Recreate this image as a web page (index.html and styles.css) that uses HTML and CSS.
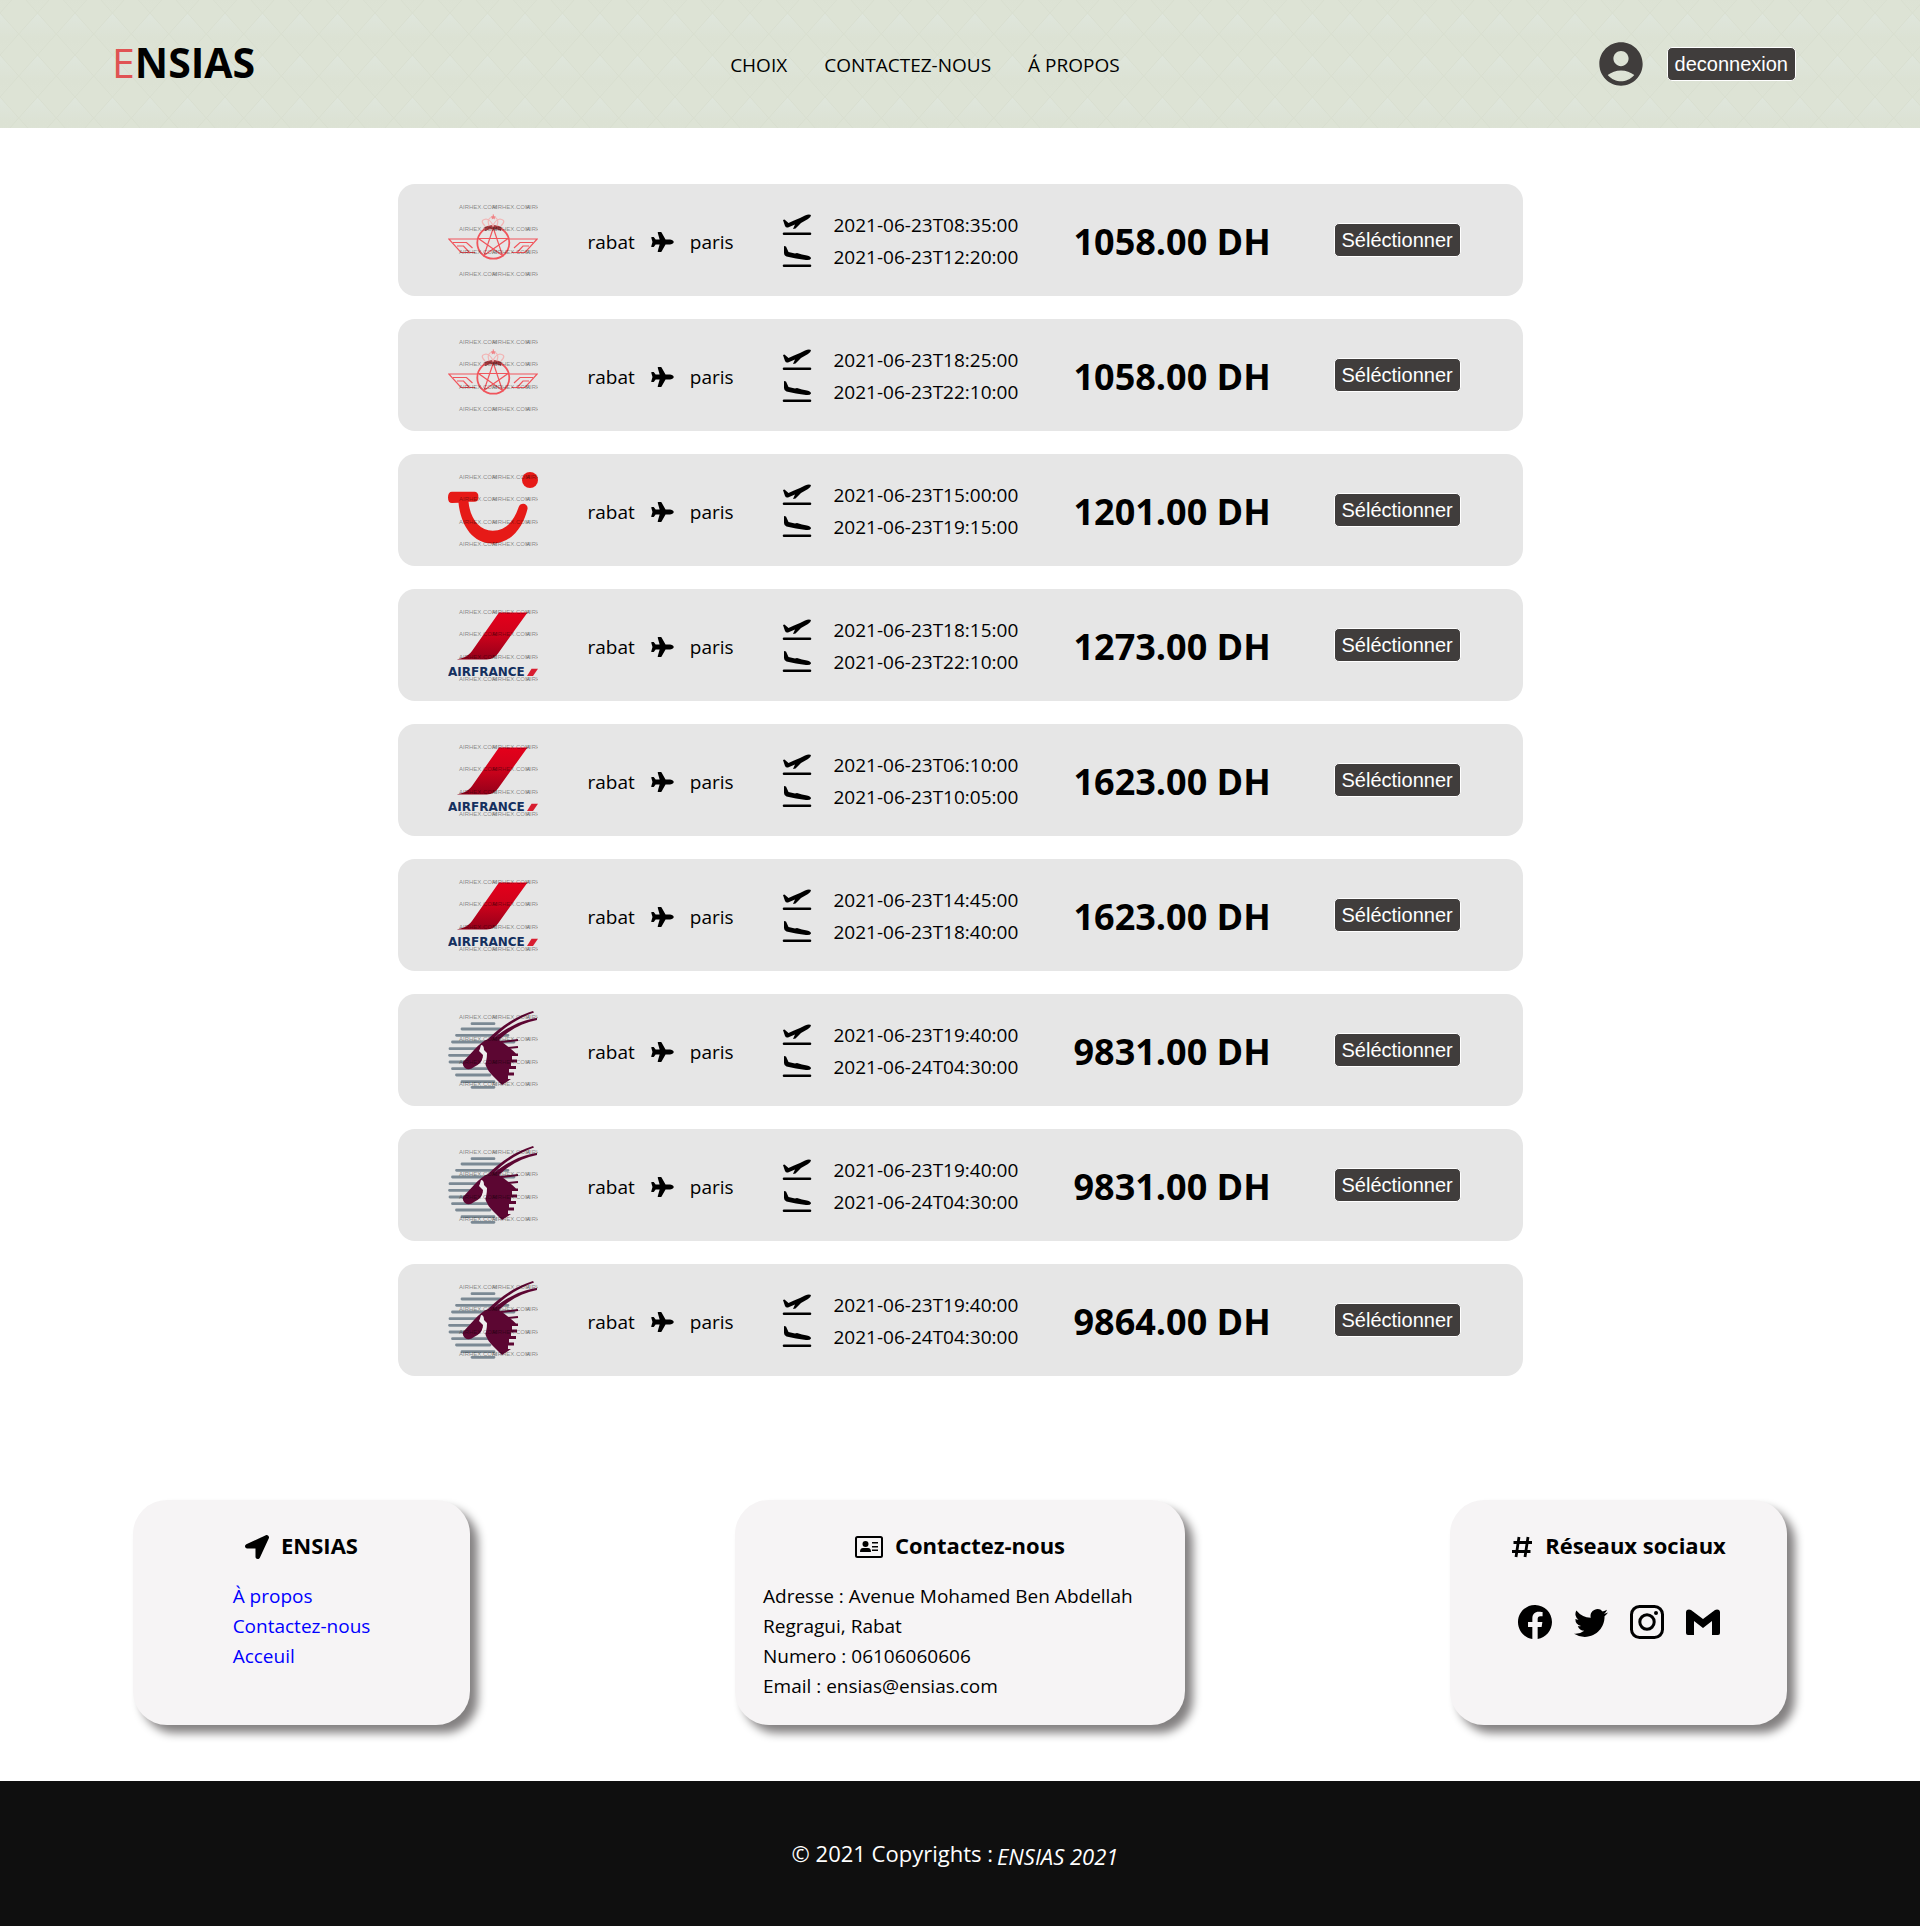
FILE: index.html
```html
<!DOCTYPE html>
<html lang="fr">
<head>
<meta charset="utf-8">
<meta name="viewport" content="width=device-width, initial-scale=1">
<title>ENSIAS - Vols</title>
<link rel="stylesheet" href="styles.css">
</head>
<body>
<svg class="sprite" aria-hidden="true">
  <defs>
    <linearGradient id="fin" x1="0" y1="0" x2="0" y2="1"><stop offset="0" stop-color="#e4001b"/><stop offset=".45" stop-color="#d0021b"/><stop offset="1" stop-color="#94001a"/></linearGradient>
    <g id="mark" class="mark">
      <text x="11" y="14">AIRHEX.COM</text><text x="44" y="14">AIRHEX.COM</text><text x="78" y="14">AIRHEX</text>
      <text x="11" y="36">AIRHEX.COM</text><text x="44" y="36">AIRHEX.COM</text><text x="78" y="36">AIRHEX</text>
      <text x="11" y="59">AIRHEX.COM</text><text x="44" y="59">AIRHEX.COM</text><text x="78" y="59">AIRHEX</text>
      <text x="11" y="81">AIRHEX.COM</text><text x="44" y="81">AIRHEX.COM</text><text x="78" y="81">AIRHEX</text>
    </g>
    <symbol id="logo-ram" viewBox="0 0 90 90">
      <g fill="none" stroke="#f0555c" stroke-width="1.2">
        <circle cx="45.3" cy="47.7" r="16" stroke-width="1.8"/>
        <path d="M45.3 33 54.5 60.5 30.5 43.5H60L36 60.5Z"/>
        <path d="M29 44H.8L13 57.5H27M5 47.5H18.500L24.500 53M9 51H15.500L21 57"/>
        <path d="M61.500 44H89.200L77 57.500H63.500M85 47.500H72L66 53M81 51H75L69.500 57"/>
      </g>
      <path d="M37 36q8-4 16 0l.5-4q-8-4-17 0Z" fill="#a53c40"/>
      <g fill="none" stroke="#f2b5b5" stroke-width="1.200"><path d="M37 31q-6-6 1-7 5 1 7 7 2-6 7-7 7 1 1 7M41 31q-3-8 4-9 7 1 4 9M45.300 22v-3"/></g>
      <path d="m45.300 19.500.8 1.700 1.800.2-1.300 1.300.3 1.800-1.600-.9-1.600.9.300-1.800-1.300-1.300 1.800-.2Z" fill="#ef8286"/>
      <use href="#mark"/>
    </symbol>
    <symbol id="logo-tui" viewBox="0 0 90 90">
      <circle cx="82" cy="15" r="8" fill="#e61a17"/>
      <path d="M4 26.700H26.500a3.800 3.800 0 0 1 3.800 4v2a4 4 0 0 1-4 4H20.500C22 53 31 65.700 44.700 65.700 58 65.700 66 56 70.500 42.500c2-6 10-4 9 1.500C76 59 65 78.500 44.700 78.500 23 78.500 12.500 58 10.500 37.700L4 38Q0 38 0 32.500 0 26.700 4 26.700Z" fill="#e61a17"/>
      <use href="#mark"/>
    </symbol>
    <symbol id="logo-af" viewBox="0 0 90 90">
      <path d="M51 12.500H79.500L50 53.500C46 58.500 42 59.500 37 59.500H8.700C17 58 21 55 24 51Z" fill="url(#fin)"/>
      <text x="0" y="76" class="af">AIRFRANCE</text>
      <path d="M79 76 83.500 68.700H90L85 76Z" fill="#d81e30"/>
      <use href="#mark"/>
    </symbol>
    <symbol id="logo-qatar" viewBox="0 0 90 90">
      <g stroke="#7b8994" stroke-width="2.800" stroke-linecap="round">
        <path d="M24 18.700H46M14 24H52M8.500 30.300H60M4.500 37H66M2 43.700H40M1.500 50.300H30M2 57H20M4.500 63.700H40M8.500 70H42M14 76.700H46M24 82.300H46"/>
      </g>
      <path d="M15 57 26 45Q33 37 40 34C52 22 66 12 85 6L86 7.500C70 13 57 22 46 33 57 24 72 15 89 13V15C74 18 61 25 51 35Q60 41 68 48.500H70V51H64V54.500H69V57.500H63V61H68V64H61V67.500H66V70.500H60V74H63L54 80 44 70Q36 62 36 50L33 58 26 62Q21 66 17 63 14 60 15 57Z" fill="#5c0632"/>
      <path d="M31 46Q32 44 33 40 36 40 36 45L39 48Q39 57 36 61L30 60Q35 56 35 50Z" fill="#eee"/>
      <path d="m53 37 17-2M59 43l11-1" stroke="#5c0632" stroke-width="2"/>
      <use href="#mark"/>
    </symbol>
    <symbol id="i-plane" viewBox="0 0 576 512"><path d="M480 192H365.710L260.610 8.060A16.014 16.014 0 0 0 246.710 0h-65.500c-10.630 0-18.300 10.170-15.380 20.390L214.860 192H112l-43.200-57.600c-3.020-4.030-7.770-6.400-12.800-6.400H16.010C5.600 128-2.040 137.780.49 147.880L32 256 .49 364.120C-2.040 374.220 5.600 384 16.010 384H56c5.040 0 9.780-2.370 12.800-6.400L112 320h102.860l-49.030 171.600c-2.920 10.220 4.750 20.400 15.380 20.400h65.500c5.740 0 11.040-3.080 13.890-8.060L365.710 320H480c35.350 0 96-28.650 96-64s-60.650-64-96-64z"/></symbol>
    <symbol id="i-up" viewBox="0 0 30 22"><path d="M2 18.500H28a1.300 1.300 0 0 1 0 2.600H2a1.300 1.300 0 0 1 0-2.600ZM1 6 2.500 5.500 6.500 9 12 6.500 18 4 23 1.500Q27-.3 29 1 29 3.300 26 5L19 9 13.500 14.500 11 15 13 10.500 6 13.500Q4 14 3 12Z"/></symbol>
    <symbol id="i-down" viewBox="0 0 30 22"><path d="M2 18.500H28a1.300 1.300 0 0 1 0 2.600H2a1.300 1.300 0 0 1 0-2.600ZM2 0 4 .5 6.500 6 13 7.500 15 7 20 8.500 25 9.500Q29 10.500 29 12.500 28 14.500 24 14L14 12.500 4.500 10.500Q2 9.500 2 7Z"/></symbol>
  </defs>
</svg>

<header class="header">
  <a class="brand" href="#"><span class="brand-e">E</span>NSIAS</a>
  <nav class="nav">
    <a href="#">CHOIX</a>
    <a href="#contact">CONTACTEZ-NOUS</a>
    <a href="#about">Á PROPOS</a>
  </nav>
  <div class="account">
    <svg class="user" viewBox="0 0 24 24" role="img" aria-label="Compte"><path d="M12 2C6.480 2 2 6.480 2 12s4.480 10 10 10 10-4.480 10-10S17.520 2 12 2zm0 4c1.930 0 3.500 1.570 3.500 3.500S13.930 13 12 13s-3.500-1.570-3.500-3.500S10.070 6 12 6zm0 14c-2.030 0-4.430-.820-6.140-2.880C7.550 15.800 9.680 15 12 15s4.450.8 6.140 2.120C16.430 19.180 14.030 20 12 20z"/></svg>
    <button class="btn" type="button">deconnexion</button>
  </div>
</header>

<main class="flights" id="flights"></main>

<section class="infos">
  <div class="info" id="about">
    <h2><svg class="i-nav" viewBox="0 0 512 512"><path d="M444.520 3.520L28.740 195.420c-47.970 22.390-31.980 92.750 19.190 92.750h175.910v175.910c0 51.170 70.360 67.170 92.750 19.190l191.900-415.780c15.990-38.390-25.590-79.970-63.970-63.970z"/></svg>ENSIAS</h2>
    <div class="links">
      <a href="#about">À propos</a>
      <a href="#contact">Contactez-nous</a>
      <a href="#flights">Acceuil</a>
    </div>
  </div>
  <div class="info info-wide" id="contact">
    <h2><svg class="i-card" viewBox="0 0 28 22"><rect x="1" y="1" width="26" height="20" rx="1.500" fill="none" stroke="#000" stroke-width="2"/><circle cx="10.500" cy="8" r="3"/><path d="M5 16q0-4 3-4h5q3 0 3 4ZM17 6h6v1.500h-6ZM17 10h6v1.500h-6ZM17 13.500h6V15h-6Z"/></svg>Contactez-nous</h2>
    <address>
      <p>Adresse : Avenue Mohamed Ben Abdellah Regragui, Rabat</p>
      <p>Numero : 06106060606</p>
      <p>Email : ensias@ensias.com</p>
    </address>
  </div>
  <div class="info">
    <h2><svg class="i-hash" viewBox="0 0 22 22"><path d="M8 1 5 21M17 1 14 21M2.500 6.500H21M1 15.500H19.500" fill="none" stroke="#000" stroke-width="2.800"/></svg>Réseaux sociaux</h2>
    <div class="social">
      <a href="#" aria-label="Facebook"><svg viewBox="0 0 16 16"><path d="M16 8.049c0-4.446-3.582-8.050-8-8.050C3.580 0-.002 3.603-.002 8.050c0 4.017 2.926 7.347 6.750 7.951v-5.625h-2.030V8.050H6.750V6.275c0-2.017 1.195-3.131 3.022-3.131.876 0 1.791.157 1.791.157v1.980h-1.009c-.993 0-1.303.621-1.303 1.258v1.510h2.218l-.354 2.326H9.250V16c3.824-.604 6.750-3.934 6.750-7.951z"/></svg></a>
      <a href="#" aria-label="Twitter"><svg viewBox="0 0 16 16"><path d="M5.026 15c6.038 0 9.341-5.003 9.341-9.334 0-.140 0-.282-.006-.422A6.685 6.685 0 0 0 16 3.542a6.658 6.658 0 0 1-1.889.518 3.301 3.301 0 0 0 1.447-1.817 6.533 6.533 0 0 1-2.087.793A3.286 3.286 0 0 0 7.875 6.030a9.325 9.325 0 0 1-6.767-3.429 3.289 3.289 0 0 0 1.018 4.382A3.323 3.323 0 0 1 .640 6.575v.045a3.288 3.288 0 0 0 2.632 3.218 3.203 3.203 0 0 1-.865.115 3.230 3.230 0 0 1-.614-.057 3.283 3.283 0 0 0 3.067 2.277A6.588 6.588 0 0 1 .780 13.580a6.320 6.320 0 0 1-.780-.045A9.344 9.344 0 0 0 5.026 15z"/></svg></a>
      <a href="#" aria-label="Instagram"><svg viewBox="0 0 34 34"><rect x="1.500" y="1.500" width="31" height="31" rx="8" fill="none" stroke="#000" stroke-width="3"/><circle cx="17" cy="17" r="7.200" fill="none" stroke="#000" stroke-width="3"/><circle cx="26" cy="8" r="2"/></svg></a>
      <a href="#" aria-label="Gmail"><svg viewBox="0 0 34 34"><path d="M0 7.500Q0 4.500 3 4.500L5 5 17 14 29 5 31 4.500Q34 4.500 34 7.500V28Q34 30 32 30H26V16L17 23 8 16V30H2Q0 30 0 28Z"/></svg></a>
    </div>
  </div>
</section>

<footer class="footer">
  <span>© 2021 Copyrights :</span>
  <a href="#">ENSIAS 2021</a>
</footer>
<script src="flights.js"></script>
</body>
</html>
```
FILE: styles.css
```css
* { box-sizing: border-box; }

body {
  margin: 0;
  background: #fff;
  color: #000;
  font-family: "Open Sans", "Noto Sans", sans-serif;
  font-size: 19px;
  font-weight: 400;
  line-height: 30px;
}

a { color: inherit; text-decoration: none; }
svg { display: block; flex: none; }
h2, p { margin: 0; }

.sprite { position: absolute; width: 0; height: 0; }

.header {
  display: flex;
  align-items: center;
  justify-content: space-between;
  min-height: 128px;
  padding: 0 124px 0 112px;
  background: #dde3d5 url("data:image/svg+xml,%3Csvg xmlns='http://www.w3.org/2000/svg' width='75' height='42' viewBox='0 0 75 42'%3E%3Cdefs%3E%3ClinearGradient id='g' x1='0' y1='0' x2='0' y2='1'%3E%3Cstop offset='0' stop-color='%23dfe6dc'/%3E%3Cstop offset='.6' stop-color='%23dce2d4'/%3E%3Cstop offset='1' stop-color='%23dde3d5'/%3E%3C/linearGradient%3E%3C/defs%3E%3Cpath d='M0 0l18.75 21L0 42l-18.750-21zM37.500 0l18.750 21-18.750 21-18.750-21zM75 0l18.750 21L75 42 56.250 21z' fill='url(%23g)'/%3E%3Cpath d='M0 0l37.500 42L75 0M0 42L37.500 0 75 42' fill='none' stroke='%23d8decf'/%3E%3C/svg%3E") 0 13px;
}

.brand { padding-bottom: 4px; font-size: 41px; font-weight: 700; line-height: 56px; }
.brand-e { color: #e05353; font-weight: 400; }

.nav { display: flex; gap: 37px; padding-top: 2px; }

.account { display: flex; align-items: center; gap: 20px; }
.user { width: 52px; height: 52px; fill: #403d3c; }

.btn {
  padding: 4px 7px;
  border: 1px solid #fff;
  border-radius: 5px;
  background: #403d3c;
  color: #fff;
  font: 20px/24px "Liberation Sans", Arial, sans-serif;
  cursor: pointer;
}

.flights {
  display: grid;
  gap: 23px;
  width: 100%;
  max-width: 1125px;
  margin: 56px auto 124px;
}

.flight {
  display: grid;
  grid-template-columns: 140px 194px 292px 260px 1fr;
  align-items: center;
  min-height: 112px;
  padding: 0 0 0 50px;
  border-radius: 17px;
  background: #e6e6e6;
}

.logo { width: 90px; height: 90px; }
.mark { font: 6px "Liberation Sans", Arial, sans-serif; fill: #000; fill-opacity: .45; }
.af { font: 700 12px "DejaVu Sans", sans-serif; fill: #14305f; }

.route { display: flex; align-items: center; gap: 16px; padding-top: 3px; }
.route svg { width: 23px; height: 20px; }

.times { display: grid; padding-top: 2px; }
.times p { display: flex; align-items: center; gap: 22px; line-height: 32px; }
.times svg { width: 30px; height: 22px; }

.price { padding-top: 4px; font-size: 36px; font-weight: 700; line-height: 48px; }
.flight .btn { justify-self: start; }

.infos {
  display: flex;
  justify-content: space-between;
  gap: 20px;
  padding: 0 133px;
  margin-bottom: 56px;
}

.info {
  width: 337px;
  min-height: 225px;
  padding: 30px 28px 24px;
  border-radius: 34px;
  background: #f6f4f5;
  box-shadow: 8px 8px 10px #838081;
}
.info-wide { width: 450px; }

.info h2 {
  display: flex;
  align-items: center;
  justify-content: center;
  gap: 12px;
  margin-bottom: 21px;
  font-size: 22px;
  font-weight: 700;
  line-height: 30px;
}
.info h2 svg { margin-top: 3px; }
.i-nav { width: 24px; height: 24px; }
.i-card { width: 28px; height: 22px; }
.i-hash { width: 22px; height: 22px; }

.links { display: grid; width: fit-content; margin: 0 auto; color: #00f; }
address { font-style: normal; }

.social { display: flex; justify-content: center; gap: 22px; padding-top: 24px; }
.social svg { width: 34px; height: 34px; }

.footer {
  display: flex;
  justify-content: center;
  gap: 4px;
  min-height: 145px;
  padding: 57px 10px 0 0;
  background: #0f0f0f;
  color: #fff;
  font-size: 22px;
}
.footer a { padding-top: 3px; font-style: italic; }
```
FILE: flights.js
```js
const flights = [
  ["ram", "2021-06-23T08:35:00", "2021-06-23T12:20:00", "1058.00"],
  ["ram", "2021-06-23T18:25:00", "2021-06-23T22:10:00", "1058.00"],
  ["tui", "2021-06-23T15:00:00", "2021-06-23T19:15:00", "1201.00"],
  ["af", "2021-06-23T18:15:00", "2021-06-23T22:10:00", "1273.00"],
  ["af", "2021-06-23T06:10:00", "2021-06-23T10:05:00", "1623.00"],
  ["af", "2021-06-23T14:45:00", "2021-06-23T18:40:00", "1623.00"],
  ["qatar", "2021-06-23T19:40:00", "2021-06-24T04:30:00", "9831.00"],
  ["qatar", "2021-06-23T19:40:00", "2021-06-24T04:30:00", "9831.00"],
  ["qatar", "2021-06-23T19:40:00", "2021-06-24T04:30:00", "9864.00"]
];

document.getElementById("flights").innerHTML = flights.map(([airline, departure, arrival, price]) => `
  <article class="flight">
    <svg class="logo"><use href="#logo-${airline}"/></svg>
    <div class="route"><span>rabat</span><svg><use href="#i-plane"/></svg><span>paris</span></div>
    <div class="times">
      <p><svg><use href="#i-up"/></svg>${departure}</p>
      <p><svg><use href="#i-down"/></svg>${arrival}</p>
    </div>
    <div class="price">${price} DH</div>
    <button class="btn" type="button">Séléctionner</button>
  </article>`).join("");
```
